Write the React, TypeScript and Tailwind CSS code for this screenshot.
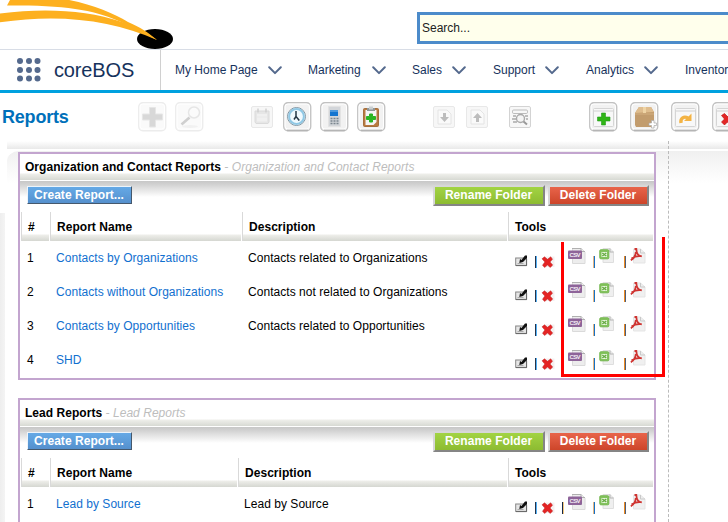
import React from 'react';

type Report = { name: string; description: string };
type Folder = { title: string; nameWidth: string; reports: Report[]; divided?: boolean };

const folders: Folder[] = [
  {
    title: 'Organization and Contact Reports',
    nameWidth: 'w-[191px]',
    reports: [
      { name: 'Contacts by Organizations', description: 'Contacts related to Organizations' },
      { name: 'Contacts without Organizations', description: 'Contacts not related to Organizations' },
      { name: 'Contacts by Opportunities', description: 'Contacts related to Opportunities' },
      { name: 'SHD', description: '' },
    ],
  },
  {
    title: 'Lead Reports',
    nameWidth: 'w-[187px]',
    divided: true,
    reports: [{ name: 'Lead by Source', description: 'Lead by Source' }],
  },
];

function Logo() {
  return (
    <svg className="absolute left-0 top-0" width="180" height="50" viewBox="0 0 180 50">
      <ellipse cx="155" cy="39" rx="18" ry="10" fill="#000" />
      <path d="M7 5.6 10.5 -1H64C92 4 113 13 128 22C140 27 149 33 157 40L121 22C98 11 66 4.5 7 5.6Z" fill="#fdb01f" />
      <path d="M0 13.5C45 8 86 10 122 22C138 27 148 33 157 40C112 20 60 13.5 0 22.3Z" fill="#fdb01f" />
    </svg>
  );
}

function Chevron({ className }: { className: string }) {
  return (
    <svg className={className} width="14" height="9" viewBox="0 0 14 9">
      <path d="M1.2 1.3 7 7.1 12.8 1.3" fill="none" stroke="#54698d" strokeWidth="2" strokeLinecap="round" strokeLinejoin="round" />
    </svg>
  );
}

function AppGrid() {
  return (
    <svg className="ml-[17px] shrink-0" width="24" height="24" viewBox="0 0 24 24">
      {[3, 12, 20.5].map((y) => [3, 12, 20.5].map((x) => <circle key={`${x}-${y}`} cx={x} cy={y} r="3" fill="#54698d" />))}
    </svg>
  );
}

type ToolKind = 'plus' | 'search' | 'calendar' | 'clock' | 'calc' | 'clip' | 'import' | 'export' | 'find' | 'add' | 'box' | 'move' | 'delete';

function Glyph({ kind }: { kind: ToolKind }) {
  switch (kind) {
    case 'plus':
      return <path d="M11.5 5.5h6v6.5h7v6h-7v7h-6v-7h-7v-6h7z" fill="#d8d8d8" stroke="#e6e6e6" />;
    case 'search':
      return (
        <g fill="none">
          <ellipse cx="15" cy="24.5" rx="8" ry="1.5" fill="#f1f1f1" />
          <circle cx="19" cy="10.5" r="5.5" fill="#fbfbfb" stroke="#e6e6e6" strokeWidth="1.5" />
          <path d="M14.5 15.5 6.5 22.5" stroke="#cfcfcf" strokeWidth="2.6" />
        </g>
      );
    case 'calendar':
      return (
        <g>
          <path d="M4 5h14v11l-1 1.5H5L4 16z" fill="#e6e6e6" stroke="#dadada" />
          <rect x="6" y="8" width="10" height="7.5" fill="#f0f0f0" />
          <path d="M7 2.5v4M15 2.5v4" stroke="#cecece" strokeWidth="1.4" />
          <path d="M6 11h10" stroke="#e8e8e8" />
        </g>
      );
    case 'clock':
      return (
        <g>
          <circle cx="13.5" cy="14.5" r="9" fill="#f8fcff" stroke="#8196a3" />
          <circle cx="13.5" cy="14.5" r="7.4" fill="#eff9fe" stroke="#8fc8e5" strokeWidth="2" />
          <path d="M13 9v5.5l3.3 4M13 14.5l-2 3" fill="none" stroke="#253745" strokeWidth="1.5" />
        </g>
      );
    case 'calc':
      return (
        <g>
          <path d="M8.5 4.5h12v20h-12z" fill="#d3d6da" stroke="#e3e3e3" />
          <rect x="10" y="8" width="8" height="6" fill="#1475d0" />
          <path d="M10 8h8v2h-8z" fill="#4b98dd" />
          <path d="M10.5 16.5h2M13.5 16.5h2M16.5 16.5h2M10.5 19h2M13.5 19h2M16.5 19h2M10.5 21.5h2M13.5 21.5h2M16.5 21.5h2" stroke="#7b868f" strokeWidth="1.4" />
        </g>
      );
    case 'clip':
      return (
        <g>
          <rect x="6.5" y="6.5" width="15" height="18" rx="1" fill="#b87940" stroke="#a56f3c" />
          <path d="M8.5 8h11v12l-3 3h-8z" fill="#f4f5f5" />
          <path d="M10 6h8v3h-8z" fill="#8f9698" /><path d="M12 4.5h4v3h-4z" fill="#c9ced0" />
          <path d="M12.5 12h3v2.5h3v3h-3V20h-3v-2.5h-3v-3h3z" fill="#29b522" stroke="#29b522" strokeLinejoin="round" />
        </g>
      );
    case 'import':
    case 'export':
      return (
        <g>
          <path d="M5 4h9l4 4v10H5z" fill="#fafafa" stroke="#e4e4e4" />
          <path d={kind === 'import' ? 'M10 7h3v4h3l-4.5 5L7 11h3z' : 'M10 16h3v-4h3l-4.5-5L7 12h3z'} fill="#bdbdbd" />
        </g>
      );
    case 'find':
      return (
        <g fill="none" stroke="#aaa">
          <rect x="3.5" y="4" width="15" height="3.5" rx="1.2" stroke="#bbb" />
          <path d="M4 10h3M3 13h4M4 16h4M16 10h3M17 13h2" strokeWidth="1.3" />
          <circle cx="11.5" cy="12.5" r="4" fill="#f4f4f4" strokeWidth="1.4" />
          <path d="m14.5 15.5 3.5 3" stroke="#999" strokeWidth="2" />
        </g>
      );
    case 'box':
      return (
        <g>
          <path d="m5 11 4-6h12l3 5v13l-3 2H6l-1-2z" fill="#c29c6d" />
          <path d="m5 11 4-6h12l3 5z" fill="#dfbd8e" /><path d="M13 5h3v8h-3z" fill="#efd4a5" />
          <path d="M5 11h19v2H5z" fill="#cba677" />
          <path d="M21.5 18.5h2.5v2.5h2.5v2.5H24V26h-2.5v-2.5H19V21h2.5z" fill="#fff" stroke="#aaa" strokeWidth=".7" />
        </g>
      );
    default:
      return (
        <g>
          <rect x="4.5" y="6.5" width="20" height="18" rx="1" fill="#f8f8f8" stroke="#d5d5d5" />
          <path d="M5 9h19" stroke="#dedede" strokeWidth="1.5" />
          {kind === 'add' && <path d="M12.5 11h4v4h4.5v4h-4.5v4h-4v-4H8.5v-4h4z" fill="#30b516" stroke="#249a1b" strokeWidth=".6" />}
          {kind === 'move' && <path d="M10 21c-.8-5 3-7.2 7-5" fill="none" stroke="#f3b344" strokeWidth="3.4" />}
          {kind === 'move' && <path d="M20.5 11.5v7.5H13z" fill="#f3b344" />}
          {kind === 'delete' && <path d="m9.5 13.5 3-2 3 3 3-3 3 2.5-3 3 3 3-3 3-3-3-3 3-3-3 3-3z" fill="#e32626" stroke="#b50808" strokeWidth=".6" />}
        </g>
      );
  }
}

function ToolButton({ kind, className, variant = 'large' }: { kind: ToolKind; className: string; variant?: 'large' | 'faded' | 'small' }) {
  if (variant === 'small') {
    return (
      <svg className={`mt-[13px] shrink-0 ${className}`} width="22" height="22" viewBox="0 0 22 22">
        <rect x=".5" y=".5" width="21" height="21" rx="1.5" fill="#f7f7f7" stroke={kind === 'find' ? '#d3d3d3' : '#e8e8e8'} />
        <Glyph kind={kind} />
      </svg>
    );
  }
  return (
    <svg className={`mt-[9px] shrink-0 ${className}`} width="29" height="30" viewBox="0 0 29 30">
      <rect x=".75" y=".75" width="27" height="28" rx="4" fill={variant === 'faded' ? '#fafafa' : '#f2f2f2'} stroke={variant === 'faded' ? '#ececec' : '#c1c1c1'} strokeWidth="1.3" />
      <rect x="2" y="2" width="24.5" height="25" rx="3" fill="none" stroke="#fff" />
      {variant === 'large' && <path d="M4 28.4h21" stroke="#b5b5b5" strokeWidth="1.5" />}
      <Glyph kind={kind} />
    </svg>
  );
}

function Pipe({ className }: { className: string }) {
  return <span className={`mt-[15px] h-3 w-[2px] shrink-0 border-x ${className}`} />;
}

function PageIcon({ kind, className }: { kind: 'csv' | 'xls' | 'pdf'; className: string }) {
  return (
    <svg className={`mt-[7px] shrink-0 ${className}`} width="18" height="16" viewBox="0 0 18 16">
      {kind === 'csv' && (
        <>
          <path d="M4.5.5h9l3.5 3.5v11.5H4.5z" fill="#ededed" stroke="#dadada" />
          <path d="M4 .5h9M13 .5v3h4" stroke="#b0b0b0" fill="none" />
          <rect y="2.5" width="14" height="8.5" rx="1" fill="#8e6499" />
          <text x="1.5" y="9" fontSize="6" fontWeight="bold" fontFamily="Liberation Sans" fill="#f3eef5" textLength="11">CSV</text>
        </>
      )}
      {kind === 'xls' && (
        <>
          <path d="M4 .5h7l3.5 3.5v10.5H4z" fill="#efefef" stroke="#dedede" />
          <path d="M11 .5V4h3.5" stroke="#b4b4b4" fill="none" />
          <rect x=".8" y="1.8" width="9" height="9" rx="1" fill="#83c35d" stroke="#72b64e" />
          <path d="M2.5 4h5.5v5H2.5z" fill="#e7f5de" /><path d="m3.3 5 4 3m0-3-4 3" stroke="#65aa42" strokeWidth="1.4" />
        </>
      )}
      {kind === 'pdf' && (
        <>
          <path d="M3.5 1h7L15 5v10H3.5z" fill="#f0f0f0" stroke="#e5e5e5" />
          <path d="M10.5 1v4H15" fill="none" stroke="#c9c9c9" />
          <path d="M4.5 1h1.8c.2 5 2 7 5.5 7.4M5.8 4C5.5 8 3.2 11 .8 12.3M1.5 10.5c3-2 6-3 10-2.3" fill="none" stroke="#cf3431" strokeWidth="1.8" />
        </>
      )}
    </svg>
  );
}

function RowTools({ divided }: { divided?: boolean }) {
  return (
    <div className="flex h-[34px] w-[146px] items-start">
      <svg className="ml-[7px] mt-[13px] shrink-0" width="13" height="13" viewBox="0 0 13 13">
        <rect x=".7" y="4" width="10.8" height="7.4" fill="#e6e6e6" stroke="#858585" />
        <path d="M1 11.6h10.6V5" stroke="#666" fill="none" /><path d="M2.5 9.5h6" stroke="#aaa" />
        <path d="m4.3 9 .7-4 1.5 1L10 1.5h2V4L8 8z" fill="#111" />
      </svg>
      <Pipe className="ml-[7px] border-l-[#25334a] border-r-[#55b1f5]" />
      <svg className="ml-[4px] mt-[15px] shrink-0" width="14" height="12" viewBox="0 0 14 12">
        <path d="M4 .5h9.5v10.5H4z" fill="#f5f0f0" />
        <path d="m1 2.8 2.5-2 3 2.5L9.7.8l1.8 2.4L9 6l2.7 2.9-2.4 2.6L6.5 9l-2.9 2.5-2.1-2.3L3.8 6z" fill="#e42424" stroke="#bd2c2c" strokeWidth=".5" />
      </svg>
      {divided ? <Pipe className="ml-[7px] mr-1 border-l-[#142748] border-r-[#f1c77d]" /> : <span className="w-[13px] shrink-0" />}
      <PageIcon kind="csv" className="" />
      <Pipe className="ml-[7px] border-l-[#e3b483] border-r-[#1672c7]" />
      <PageIcon kind="xls" className="ml-[4px]" />
      <Pipe className="ml-[7px] border-l-[#ec8920] border-r-[#4f5f78]" />
      <PageIcon kind="pdf" className="ml-[4px]" />
    </div>
  );
}

const headCell = 'flex h-[29px] items-center border-l border-[#d9d9d9] bg-[linear-gradient(to_bottom,#fff_22px,#eeeeea_23px,#d5d7d1_29px)] pl-[6px] font-bold';

function FolderPanel({ folder }: { folder: Folder }) {
  return (
    <section className="w-[638px] border-2 border-[#c3a5cf] bg-white tracking-[0.04px]">
      <div className="h-[26px] whitespace-nowrap bg-[linear-gradient(to_bottom,#fff_19px,#eeeeea_20px,#d7d9d3_26px)] pl-[5px] leading-[26px]">
        <b>{folder.title}</b><i className="text-[#bdbdbd]"> - {folder.title}</i>
      </div>
      <div className="mt-px flex h-[31px] items-start bg-[linear-gradient(to_bottom,#c7c7c7_0,#d0d0d0_3px,#fff_16px)] pl-[7px] pr-[5px] pt-1 text-[12px] font-bold text-white">
        <button className="mt-px h-[18px] w-[105px] border border-b-[#45586c] border-l-[#edf4fb] border-r-[#45586c] border-t-[#edf4fb] bg-linear-to-b from-[#65a9e6] to-[#5590cd] pr-px text-center leading-[15px]">Create Report...</button>
        <button className="ml-auto h-[21px] w-[112px] border-2 border-b-[#858585] border-l-[#d7d7d7] border-r-[#858585] border-t-[#d7d7d7] bg-linear-to-b from-[#a2d443] to-[#8dbb31] pr-px leading-[15px]">Rename Folder</button>
        <button className="ml-[3px] h-[21px] w-[101px] border-2 border-b-[#858585] border-l-[#d7d7d7] border-r-[#858585] border-t-[#d7d7d7] bg-linear-to-b from-[#e8644a] to-[#cd4529] pr-px leading-[15px]">Delete Folder</button>
      </div>
      <div className="flex gap-px px-px">
        <div className={`${headCell} w-[28px]`}>#</div>
        <div className={`${headCell} ${folder.nameWidth}`}>Report Name</div>
        <div className={`${headCell} flex-1`}>Description</div>
        <div className={`${headCell} w-[145px]`}>Tools</div>
      </div>
      {folder.reports.map((report, index) => (
        <div key={report.name} className="flex h-[34px] gap-px px-px leading-[34px]">
          <div className="w-[28px] pl-[6px]">{index + 1}</div>
          <div className={`${folder.nameWidth} whitespace-nowrap pl-[6px] text-[#1170cf]`}>{report.name}</div>
          <div className="flex-1 pl-[6px]">{report.description}</div>
          <div className="w-[145px]"><RowTools divided={folder.divided} /></div>
        </div>
      ))}
      <div className="h-px" />
    </section>
  );
}

export default function App() {
  return (
    <div className="relative flex h-[522px] w-[728px] flex-col overflow-hidden bg-white font-['Liberation_Sans',Arial,sans-serif] text-[12px] text-black">
      <header className="flex h-[50px] shrink-0 justify-end border-b border-[#d8dde6] pt-3">
        <input aria-label="Search" placeholder="Search..." className="h-8 w-[311px] border-[3px] border-r-0 border-[#4c8bca] bg-[#ffffec] pl-[2px] placeholder:text-[#222]" />
        <Logo />
      </header>
      <nav className="flex h-[43px] shrink-0 items-center border-b-[3px] border-[#00a1df] text-[#16325c]">
        <AppGrid />
        <span className="ml-[13px] w-[106px] shrink-0 text-[20px] tracking-[-0.15px]">coreBOS</span>
        <div className="flex h-full shrink-0 items-center whitespace-nowrap border-l border-[#d0d0d0] pl-[14px]">
          <span className="w-[93px]">My Home Page</span><Chevron className="w-[14px]" />
          <span className="ml-[26px] w-[64px]">Marketing</span><Chevron className="w-[14px]" />
          <span className="ml-[26px] w-[40px]">Sales</span><Chevron className="w-[14px]" />
          <span className="ml-[27px] w-[52px]">Support</span><Chevron className="w-[14px]" />
          <span className="ml-[27px] w-[58px]">Analytics</span><Chevron className="w-[14px]" />
          <span className="ml-[27px]">Inventor</span>
        </div>
      </nav>
      <div className="flex h-12 shrink-0 overflow-hidden">
        <h1 className="ml-[2px] w-[136px] shrink-0 text-[18px] font-bold leading-[48px] tracking-[-0.2px] text-[#0070ba]">Reports</h1>
        <ToolButton kind="plus" variant="faded" className="" />
        <ToolButton kind="search" variant="faded" className="ml-2" />
        <ToolButton kind="calendar" variant="small" className="ml-[47px]" />
        <ToolButton kind="clock" className="ml-[10px]" />
        <ToolButton kind="calc" className="ml-2" />
        <ToolButton kind="clip" className="ml-2" />
        <ToolButton kind="import" variant="small" className="ml-[47px]" />
        <ToolButton kind="export" variant="small" className="ml-[11px]" />
        <ToolButton kind="find" variant="small" className="ml-[21px]" />
        <ToolButton kind="add" className="ml-[58px]" />
        <ToolButton kind="box" className="ml-3" />
        <ToolButton kind="move" className="ml-3" />
        <ToolButton kind="delete" className="ml-3" />
      </div>
      <div className="flex min-h-0 flex-1">
        <div className="w-[5px] shrink-0 pt-[72px]"><div className="h-full bg-linear-to-r from-[#eee] to-[#f4f4f4]" /></div>
        <div className="ml-[2px] flex min-w-0 flex-1 flex-col">
          <div className="h-[8px] shrink-0 bg-linear-to-b from-white to-[#e9e9e9]"><div className="h-full w-[662px] border-r border-dashed border-[#bbb]" /></div>
          <div className="flex min-h-0 flex-1 rounded-tl-xl border-t-2 border-white bg-[linear-gradient(to_bottom,#f0f0f0,#fff_32px)]">
            <main className="flex w-[662px] shrink-0 flex-col gap-[18px] border-r border-dashed border-[#bbb] pl-[11px] pt-px">
              {folders.map((folder) => <FolderPanel key={folder.title} folder={folder} />)}
            </main>
          </div>
        </div>
      </div>
      <div className="absolute left-[561px] top-[242px] h-[135px] w-[104px] border-b-[3px] border-l-[3px] border-[#f00]" />
      <div className="absolute left-[662px] top-[237px] h-[140px] w-[3px] bg-[#f00]" />
    </div>
  );
}
